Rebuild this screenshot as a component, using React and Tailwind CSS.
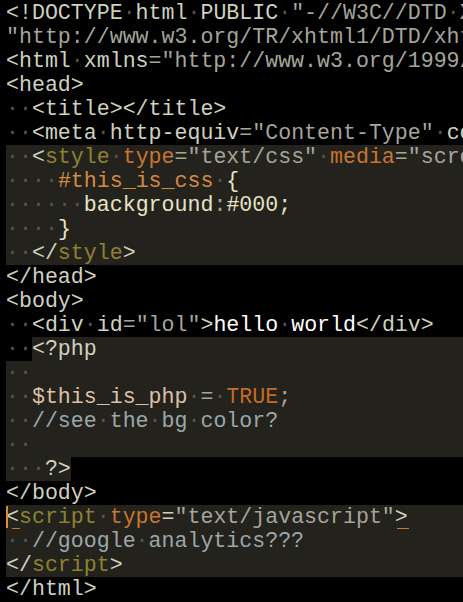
import React from "react";

const T = "text-[#cfd1bf]";
const S = "text-[#a5a59c]";
const O = "text-[#8d8230]";
const A = "text-[#c7762f]";
const I = "text-[#d38a42]";
const L = "text-[#e9e3c6]";
const W = "text-white";
const C = "text-[#9ba7aa]";
const P = "text-[#dcc0a8]";
const R = "text-[#c56c22]";
const D = "text-[#55554f]";

function Tok({ text, cls }) {
  const parts = text.split(/( )/);
  return (
    <>
      {parts.map((p, i) =>
        p === " " ? (
          <span key={i} className={D}>·</span>
        ) : p ? (
          <span key={i} className={cls}>{p}</span>
        ) : null
      )}
    </>
  );
}

function Toks({ toks }) {
  return (
    <>
      {toks.map(([t, c], i) => (
        <Tok key={i} text={t} cls={c} />
      ))}
    </>
  );
}

const HL = "bg-[#23221c]";

function Line({ toks, hl, children }) {
  return (
    <div className="flex h-6 pl-[6px] overflow-hidden whitespace-pre">
      <div className={"flex-1 h-6 " + (hl ? HL : "")}>
        {children ? children : <Toks toks={toks} />}
      </div>
    </div>
  );
}

export default function App() {
  return (
    <div
      className="w-[463px] h-[602px] bg-black overflow-hidden pt-[1px] text-[21.6px] leading-[24px]"
      style={{ fontFamily: '"Liberation Mono", monospace' }}
    >
      <Line toks={[["<!DOCTYPE html PUBLIC ", T], ['"-//W3C//DTD XHTML 1.0 Transitional//EN"', S]]} />
      <Line toks={[['"http://www.w3.org/TR/xhtml1/DTD/xhtml1-transitional.dtd"', S], [">", T]]} />
      <Line toks={[["<html xmlns", T], ['="http://www.w3.org/1999/xhtml"', S], [">", T]]} />
      <Line toks={[["<head>", T]]} />
      <Line toks={[["  <title></title>", T]]} />
      <Line toks={[["  <meta http-equiv", T], ['="Content-Type"', S], [" content", T], ['="text/html; charset=utf-8"', S], [" />", T]]} />
      <Line hl toks={[["  <", T], ["style", O], [" ", T], ["type", A], ['="text/css"', S], [" ", T], ["media", A], ['="screen"', S], [">", T]]} />
      <Line hl toks={[["    ", T], ["#this_is_css", I], [" {", L]]} />
      <Line hl toks={[["      ", T], ["background", L], [":", S], ["#000;", L]]} />
      <Line hl toks={[["    }", L]]} />
      <Line hl toks={[["  </", T], ["style", O], [">", T]]} />
      <Line toks={[["</head>", T]]} />
      <Line toks={[["<body>", T]]} />
      <Line toks={[["  <div id", T], ['="lol"', S], [">", T], ["hello world", W], ["</div>", T]]} />
      <Line>
        <div className="flex h-6">
          <Toks toks={[["  ", T]]} />
          <div className={"flex-1 h-6 " + HL}>
            <Toks toks={[["<?php", T]]} />
          </div>
        </div>
      </Line>
      <Line hl toks={[["  ", T]]} />
      <Line hl toks={[["  ", T], ["$this_is_php", P], [" ", T], ["=", S], [" ", T], ["TRUE", R], [";", S]]} />
      <Line hl toks={[["  ", T], ["//see the bg color?", C]]} />
      <Line hl toks={[["  ", T]]} />
      <Line>
        <span className={"inline-block h-6 " + HL}>
          <Toks toks={[["   ?>", T]]} />
        </span>
      </Line>
      <Line toks={[["</body>", T]]} />
      <Line hl>
        <span className="relative inline-block h-6 align-top">
          <span className="absolute left-0 top-[1px] w-[2px] h-[22px] bg-[#e08a30]" />
          <span className={T}>{"<"}</span>
          <span className="absolute left-[6px] w-[8px] bottom-[-1px] h-[2px] bg-[#c8782a]" />
        </span>
        <Toks toks={[["script", O], [" ", T], ["type", A], ["=", T], ['"text/javascript"', S]]} />
        <span className="relative inline-block h-6 align-top">
          <span className={T}>{">"}</span>
          <span className="absolute left-[2px] w-[12px] bottom-[-1px] h-[2px] bg-[#c8782a]" />
        </span>
      </Line>
      <Line hl toks={[["  ", T], ["//google analytics???", C]]} />
      <Line hl toks={[["</", T], ["script", O], [">", T]]} />
      <Line toks={[["</html>", T]]} />
    </div>
  );
}
